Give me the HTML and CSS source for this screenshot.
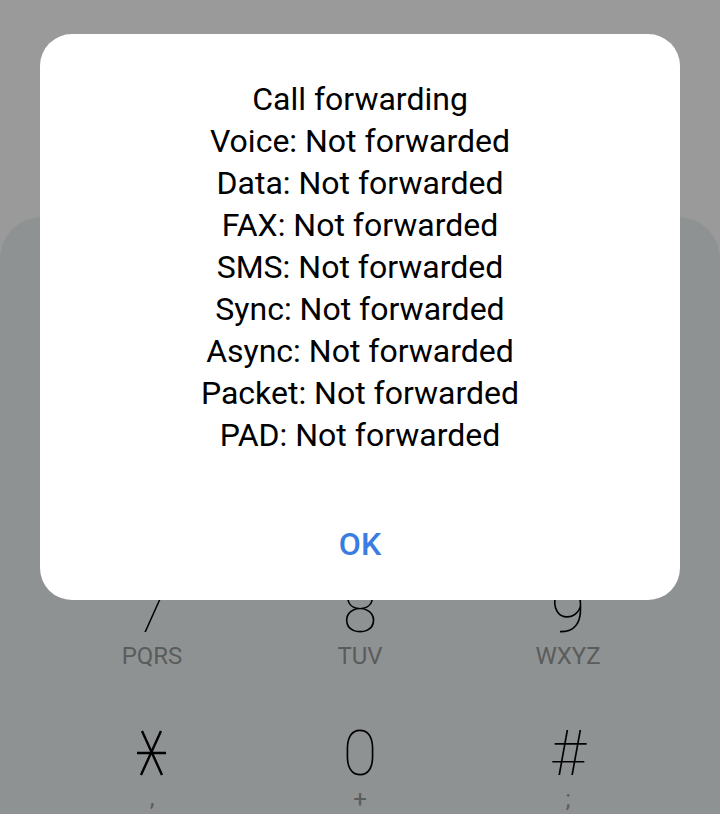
FILE: index.html
```html
<!DOCTYPE html>
<html lang="en">

<head>
	<meta charset="UTF-8">
	<title>Call forwarding</title>
	<link rel="stylesheet" href="styles.css">
</head>

<body>
<!-- dial pad, upper rows are covered by the dialog -->
<div class="keypad">
	<div class="key"><span class="num">7</span><span class="sub">PQRS</span></div>
	<div class="key"><span class="num">8</span><span class="sub">TUV</span></div>
	<div class="key"><span class="num">9</span><span class="sub">WXYZ</span></div>
	<div class="key">
		<span class="num" aria-label="*">
			<svg class="star" width="30" height="46" viewBox="0 0 30 46">
				<path d="M5 1 L25 45 M24 1 L4 45 M0 23 L29 23" stroke="#000" stroke-width="2.4" fill="none"/>
			</svg>
		</span>
		<span class="sub">,</span>
	</div>
	<div class="key"><span class="num">0</span><span class="sub">+</span></div>
	<div class="key"><span class="num">#</span><span class="sub">;</span></div>
</div>

<div class="dialog">
	<div class="msg">
		<p>Call forwarding</p>
		<p>Voice: Not forwarded</p>
		<p>Data: Not forwarded</p>
		<p>FAX: Not forwarded</p>
		<p>SMS: Not forwarded</p>
		<p>Sync: Not forwarded</p>
		<p>Async: Not forwarded</p>
		<p>Packet: Not forwarded</p>
		<p>PAD: Not forwarded</p>
	</div>
	<div class="btn">OK</div>
</div>
</body>

</html>
```

FILE: styles.css
```css
* {
	padding: 0;
	margin: 0;
	box-sizing: border-box;
}

body {
	width: 720px;
	height: 814px;
	overflow: hidden;
	background: #9a9a9a;
	font-family: Roboto, "Liberation Sans", sans-serif;
	padding-top: 217px;
	position: relative;
}

.keypad {
	background: #8f9292;
	border-radius: 42px 42px 0 0;
	height: 597px;
	padding: 362px 48px 0;
	display: grid;
	grid-template-columns: repeat(3, 208px);
	grid-auto-rows: 89px;
	row-gap: 54px;
}

.key {
	display: flex;
	flex-direction: column;
	align-items: center;
}

.num {
	height: 63px;
	font-size: 63px;
	line-height: 63px;
	font-weight: 100;
	color: #000;
}

.star {
	display: block;
	margin-top: 8px;
}

.sub {
	margin-top: 1px;
	font-size: 24px;
	line-height: 26px;
	color: #5a5c5c;
}

/* dialog sits over the keypad */
.dialog {
	position: absolute;
	left: 40px;
	top: 34px;
	width: 640px;
	height: 566px;
	background: #fff;
	border-radius: 32px;
	padding-top: 44px;
	text-align: center;
}

.msg p {
	font-size: 32px;
	line-height: 42px;
	color: #000;
}

.btn {
	margin-top: 67px;
	font-size: 32px;
	line-height: 42px;
	font-weight: 500;
	color: #3a7de0;
}
```
